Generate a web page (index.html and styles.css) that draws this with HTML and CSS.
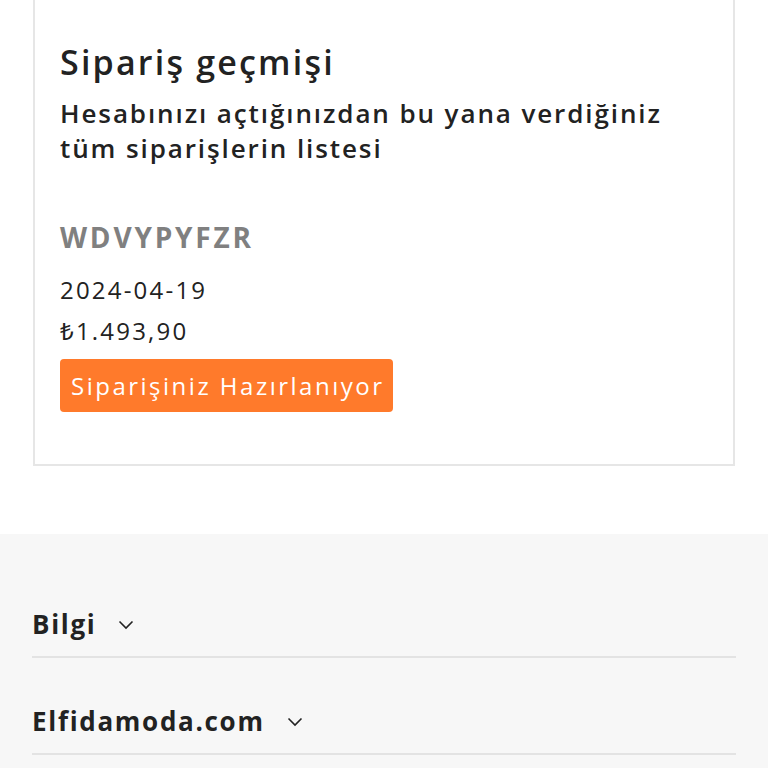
FILE: index.html
```html
<!DOCTYPE html>
<html lang="tr">
<head>
<meta charset="utf-8">
<link rel="stylesheet" href="styles.css">
</head>
<body>
<main class="page">
  <section class="card">
    <h1 class="title">Sipariş geçmişi</h1>
    <p class="subtitle">Hesabınızı açtığınızdan bu yana verdiğiniz tüm siparişlerin listesi</p>
    <div class="order">
      <div class="ref">WDVYPYFZR</div>
      <div class="date">2024-04-19</div>
      <div class="price">₺1.493,90</div>
      <span class="status">Siparişiniz Hazırlanıyor</span>
    </div>
  </section>
</main>
<footer class="footer">
  <div class="fitem">
    <span class="flabel">Bilgi</span>
    <svg class="chev" viewBox="0 0 16 10" width="16" height="10"><path d="M1.5 1.5 L8 8 L14.5 1.5" fill="none" stroke="#222" stroke-width="1.6"/></svg>
  </div>
  <div class="fitem">
    <span class="flabel">Elfidamoda.com</span>
    <svg class="chev" viewBox="0 0 16 10" width="16" height="10"><path d="M1.5 1.5 L8 8 L14.5 1.5" fill="none" stroke="#222" stroke-width="1.6"/></svg>
  </div>
</footer>
</body>
</html>
```
FILE: styles.css
```css
html, body {
  margin: 0;
  padding: 0;
  background: #fff;
  font-family: "Open Sans", "Noto Sans", sans-serif;
  color: #222;
}
.page {
  padding: 0 33px 68px;
}
.card {
  border: 2px solid #e6e6e6;
  border-top: 0;
  padding: 38px 25px 52px;
}
.title {
  margin: 0;
  font-size: 34px;
  font-weight: 600;
  line-height: 48px;
  letter-spacing: 2.2px;
}
.subtitle {
  margin: 10px 0 0;
  font-size: 26px;
  font-weight: 600;
  line-height: 35px;
  letter-spacing: 1.9px;
}
.order {
  margin-top: 52px;
  display: flex;
  flex-direction: column;
  align-items: flex-start;
}
.ref {
  font-size: 28px;
  font-weight: 700;
  color: #808080;
  line-height: 38px;
  letter-spacing: 2.8px;
  margin-bottom: 13px;
}
.date, .price {
  font-size: 24px;
  line-height: 41px;
  letter-spacing: 2.2px;
}
.status {
  margin-top: 8px;
  background: #ff7a2b;
  color: #fff;
  font-size: 24px;
  line-height: 53px;
  letter-spacing: 2.5px;
  padding: 0 9px 0 11px;
  border-radius: 4px;
}
.footer {
  background: #f7f7f7;
  padding: 58px 32px 0;
  min-height: 300px;
}
.fitem {
  display: flex;
  align-items: center;
  gap: 22px;
  height: 64px;
  border-bottom: 2px solid #e3e3e3;
  padding-top: 31px;
}
.fitem:first-child {
  padding-top: 0;
}
.flabel {
  font-size: 26px;
  font-weight: 700;
  letter-spacing: 1.7px;
}
.chev {
  margin-top: 2px;
}
```
